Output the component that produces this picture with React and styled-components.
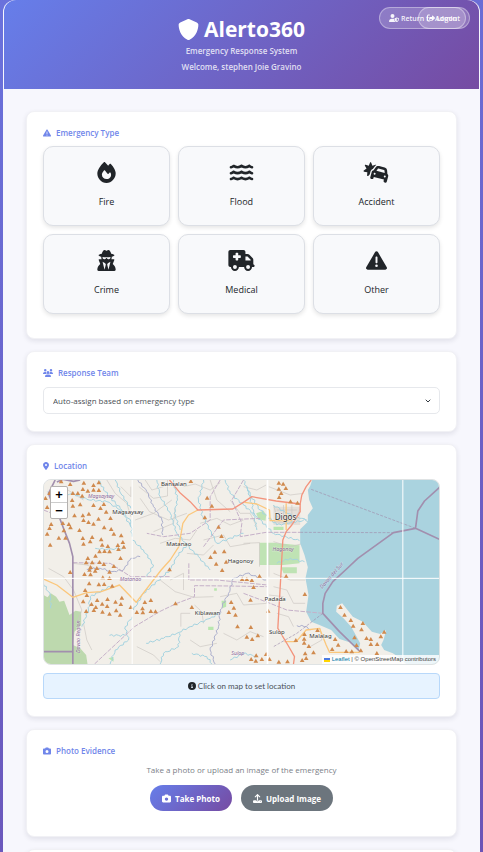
import React from "react";
import styled, { createGlobalStyle, css } from "styled-components";
import {
  FaShield,
  FaUserShield,
  FaRightFromBracket,
  FaTriangleExclamation,
  FaFire,
  FaWater,
  FaCarBurst,
  FaUserSecret,
  FaTruckMedical,
  FaUsers,
  FaLocationDot,
  FaCircleInfo,
  FaCamera,
  FaUpload,
} from "react-icons/fa6";

const GlobalStyle = createGlobalStyle`
  *, *::before, *::after { box-sizing: border-box; }
  body {
    margin: 0;
    background: linear-gradient(160deg, #6a72dc 0%, #6c52b4 100%);
    color: #212529;
    font-family: "Open Sans", "Noto Sans", sans-serif;
    font-size: 8px;
  }
  button, select { font-family: inherit; }
`;

const Shell = styled.div`
  margin: 0 3px;
  min-height: 100vh;
  padding: 0 1px;
  border-radius: 12px 12px 0 0;
  background: #f7f7fd;
`;

const Header = styled.header`
  position: relative;
  display: flex;
  flex-direction: column;
  align-items: center;
  padding: 16px 12px 14px;
  border-radius: 12px 12px 0 0;
  background: linear-gradient(135deg, #667eea 0%, #764ba2 100%);
  color: #fff;
`;

const Brand = styled.h1`
  display: flex;
  align-items: center;
  gap: 5px;
  margin: 0;
  font-size: 21px;
  font-weight: 700;
  line-height: 27px;
`;

const HeaderLine = styled.p`
  margin: 0;
  font-weight: 600;
  line-height: 16px;
  color: rgba(255, 255, 255, 0.8);
`;

const HeaderLink = styled.a`
  position: absolute;
  top: 7px;
  right: ${(p) => p.$right}px;
  display: flex;
  align-items: center;
  gap: 2px;
  height: 22px;
  padding: 0 ${(p) => p.$padEnd}px 0 ${(p) => p.$padStart}px;
  border: 1px solid rgba(255, 255, 255, 0.35);
  border-radius: 11px;
  background: rgba(255, 255, 255, 0.2);
  color: rgba(255, 255, 255, 0.92);
  font-size: 7px;
  font-weight: 600;
  white-space: nowrap;
  text-decoration: none;

  svg {
    width: ${(p) => p.$iconWidth || 8}px;
    height: 8px;
  }
`;

const Main = styled.main`
  display: flex;
  flex-direction: column;
  gap: 12px;
  padding: 22px 22px 0;
`;

const Card = styled.section`
  padding: 14px 16px 17px;
  min-height: 60px;
  border: 1px solid #f1f1f5;
  border-radius: 8px;
  background: #fff;
  box-shadow: 0 2px 5px rgba(30, 30, 60, 0.1);
`;

const titleStyle = css`
  display: flex;
  align-items: center;
  gap: 5px;
  margin: 0 0 7px;
  color: #7086ea;
  font-size: 8px;
  font-weight: 600;
  line-height: 13px;

  svg {
    width: ${(p) => p.$iconWidth || 8}px;
    height: 8px;
  }
`;

const CardTitle = styled.h2`
  ${titleStyle}
`;

const CardLabel = styled.label`
  ${titleStyle}
  margin-bottom: 8px;
`;

const TypeGrid = styled.div`
  display: grid;
  grid-template-columns: repeat(3, 1fr);
  gap: 8px;
  margin-bottom: 7px;
`;

const TypeButton = styled.button`
  display: flex;
  flex-direction: column;
  align-items: center;
  gap: 11px;
  height: 80px;
  padding: 15px 8px 0;
  border: 1px solid #dcdfe5;
  border-radius: 10px;
  background: #f8f9fb;
  box-shadow: 0 2px 4px rgba(0, 0, 0, 0.1);
  color: #212529;
  font-size: 9px;
  font-weight: 500;
  line-height: 14px;

  svg {
    width: 27px;
    height: 21px;
    margin-bottom: 1px;
  }
`;

const SelectWrap = styled.div`
  display: grid;
  align-items: center;
`;

const TeamSelect = styled.select`
  grid-area: 1 / 1;
  appearance: none;
  width: 100%;
  height: 27px;
  padding: 0 24px 0 9px;
  border: 1px solid #e6e8ec;
  border-radius: 5px;
  background: #fff;
  color: #4a4f55;
  font-size: 8px;
  font-weight: 500;
`;

const Chevron = styled.svg`
  grid-area: 1 / 1;
  justify-self: end;
  margin-right: 9px;
  width: 6px;
  height: 6px;
  pointer-events: none;
`;

const MapFrame = styled.div`
  position: relative;
  height: 186px;
  margin-bottom: 8px;
  overflow: hidden;
  border: 1px solid #dfe3e4;
  border-radius: 8px;
  background: #f2efe9;
`;

const MapArt = styled.svg`
  display: block;
  width: 100%;
  height: 100%;
`;

const ZoomBar = styled.div`
  position: absolute;
  top: 6px;
  left: 6px;
  display: flex;
  flex-direction: column;
  border: 1px solid #b5b2b0;
  border-radius: 2px;
  background: #fff;
`;

const ZoomButton = styled.button`
  width: 16px;
  height: 15px;
  padding: 0;
  border: 0;
  background: none;
  color: #000;
  font-family: "Liberation Sans", sans-serif;
  font-size: 13px;
  font-weight: 700;
  line-height: 14px;

  & + & {
    height: 16px;
    border-top: 1px solid #ccc;
  }
`;

const Attribution = styled.div`
  position: absolute;
  right: 0;
  bottom: 0;
  display: flex;
  align-items: center;
  gap: 2px;
  padding: 0 3px 0 2px;
  background: rgba(255, 255, 255, 0.8);
  color: #444;
  font-family: "Liberation Sans", sans-serif;
  font-size: 6px;
  line-height: 9px;
  white-space: nowrap;

  a {
    color: #0078a8;
    text-decoration: none;
  }
`;

const Flag = styled.svg`
  width: 6px;
  height: 4px;
`;

const Notice = styled.p`
  display: flex;
  align-items: center;
  justify-content: center;
  gap: 2px;
  height: 26px;
  margin: 0;
  border: 1px solid #b8d8fa;
  border-radius: 4px;
  background: #e7f3ff;
  color: #495057;
  font-family: Lato, "Open Sans", sans-serif;

  svg {
    color: #212529;
  }
`;

const Hint = styled.p`
  margin: 0 0 10px;
  color: #7b8087;
  line-height: 11px;
  text-align: center;
`;

const Actions = styled.div`
  display: flex;
  justify-content: center;
  gap: 9px;
  margin-bottom: 8px;
`;

const PillButton = styled.button`
  display: flex;
  align-items: center;
  gap: 4px;
  height: 26px;
  padding: 0 12px;
  border: 0;
  border-radius: 13px;
  background: ${(p) =>
    p.$primary ? "linear-gradient(135deg, #667eea 0%, #764ba2 100%)" : "#6c757d"};
  color: #fff;
  font-size: 8px;
  font-weight: 700;

  svg {
    width: 9px;
    height: 9px;
  }
`;

const TYPES = [
  { label: "Fire", Icon: FaFire },
  { label: "Flood", Icon: FaWater },
  { label: "Accident", Icon: FaCarBurst },
  { label: "Crime", Icon: FaUserSecret },
  { label: "Medical", Icon: FaTruckMedical },
  { label: "Other", Icon: FaTriangleExclamation },
];

const PEAKS = `53,5 80,13 121,9 166,8 150,16 118,28 133,33 150,30 166,31 6,55 18,40 88,40 103,40 116,48 86,61
150,76 181,73 171,85 188,96 201,115 11,82 88,78 110,74 93,107 118,107 136,102 165,117 120,121 135,127 150,132
76,133 58,130 23,133 18,145 81,143 108,151 61,152 11,162 46,174 66,174 20,195 118,175 120,192 140,185 146,172
182,143 203,148 211,162 233,167 238,187 173,179 176,195 168,215 183,214 198,215 193,199 223,196 225,208 241,201
156,228 133,235 231,235 146,248 128,248 168,247 181,253 211,259 141,262 160,265 442,4 491,54 505,78 484,113
525,141 534,169 542,215 514,216 501,232 548,246 518,252 80,277 138,270 155,273 123,283 141,284 198,276 178,293
198,295 137,311 166,314 182,313 206,318 125,331 130,346 119,365 161,361 192,358 235,354 216,366 232,373 144,373
157,382 176,372 191,379 128,394 151,391 177,396 198,402 218,392 230,405 262,382 280,397 298,398 304,367 322,361
297,386 322,394 336,395 378,269 396,371 445,382 536,271 596,298 563,367 571,384 556,397 576,405 582,440
706,9 719,12 706,27 727,25 713,40 707,52 741,65 762,69 610,298 625,301 648,289 728,289 630,322 621,360 784,343
674,393 622,442 610,471 643,467 626,478 638,527 623,538 637,543 655,538 668,523 678,538 706,546 732,545 776,541
788,535 785,521 810,518 796,499 782,489 782,477 783,463 757,481 822,451 875,478 884,495 866,508 908,514 925,515
952,512 939,496 891,382 903,405 922,421 929,438 954,449 958,430 933,473 969,475 982,478 982,493 1001,493
1012,470 1022,456 1000,520`
  .split(/\s+/)
  .map((p) => p.split(",").map(Number));

const parse = (text) => text.split(" ").map((p) => p.split(",").map(Number));

// Subdivides a polyline and bends it sideways so that streams look natural.
function meander(text, amp = 3) {
  const pts = parse(text);
  const out = [pts[0]];
  for (let i = 1; i < pts.length; i += 1) {
    const [x0, y0] = pts[i - 1];
    const [x1, y1] = pts[i];
    const len = Math.hypot(x1 - x0, y1 - y0) || 1;
    const steps = Math.max(2, Math.round(len / 7));
    for (let s = 1; s <= steps; s += 1) {
      const t = s / steps;
      const k = Math.sin(s * 2.3 + x0) * amp * (s === steps ? 0 : 1);
      out.push([
        Math.round(x0 + (x1 - x0) * t - ((y1 - y0) / len) * k),
        Math.round(y0 + (y1 - y0) * t + ((x1 - x0) / len) * k),
      ]);
    }
  }
  return out.map((p) => p.join(",")).join(" ");
}

const STREAMS = [
  "165,0 185,35 230,85 262,125 266,170",
  "215,0 235,45 262,85",
  "85,40 130,58 190,65 235,92 262,140",
  "12,35 50,50 85,40",
  "340,0 350,50 378,95 400,160 430,195",
  "390,0 402,60 392,100 410,150",
  "480,0 465,60 478,110 500,150 520,190 600,160",
  "545,0 560,40 600,75 640,110 690,160 768,182",
  "266,180 300,210 330,255 310,290",
  "430,195 400,230 380,270 300,340 270,390",
  "430,195 470,235 500,270",
  "155,205 190,208 240,205",
  "0,310 20,345 22,385",
  "266,410 245,440 255,480 215,510 200,552",
  "198,466 245,466",
  "308,490 360,475 400,460 440,440 500,415 528,400",
  "350,552 360,520 405,500 408,460",
  "445,520 490,530 505,552",
  "200,320 140,350 135,390 115,440",
  "600,0 620,45 650,90 700,135 790,120",
  "700,250 740,235 783,245",
  "690,75 730,100 775,115 795,125",
  "560,540 600,520 640,530",
  "610,20 625,70 640,150",
];

const BORDER_STREAMS = [
  "283,0 310,35 330,80 355,120 358,165",
  "130,268 170,265 205,275 240,270 262,235 290,230",
  "668,300 610,280 570,295 555,340 530,390 525,440 500,510 515,552",
  "760,437 790,440 800,450",
];

const LANES = [
  "190,0 215,40 250,70 262,110",
  "232,20 262,50 262,20",
  "286,20 330,55 372,48 372,0",
  "290,55 318,95 375,120 430,100",
  "275,120 330,100 385,60",
  "330,155 390,130 395,85",
  "350,190 395,175 440,180 460,150",
  "420,20 455,12 500,30 530,8",
  "470,130 520,115 560,135 600,120",
  "480,180 540,165 560,200 620,190",
  "430,220 480,225 510,195",
  "350,300 395,335 452,352 510,350",
  "380,300 420,280 420,330",
  "453,375 475,395 480,430",
  "412,440 412,400 440,400",
  "530,350 580,340 600,375 670,370",
  "540,460 580,480 620,455 660,470",
  "280,500 330,525 350,545",
  "440,480 470,500 520,490",
  "15,265 60,290 90,330 115,390 100,430",
  "120,430 130,480 145,510",
  "88,250 130,255 170,270",
  "600,20 640,30 668,15",
  "676,20 740,45 780,40",
  "600,190 648,188 648,260",
  "676,190 676,290",
  "690,280 740,300 785,300",
  "690,320 730,330 750,370 785,370",
  "676,345 720,350",
  "560,60 590,100 620,100 640,140",
  "690,75 700,110 760,110 770,85",
  "700,90 760,90",
  "720,75 720,130",
  "745,75 745,130",
  "690,125 750,130",
  "780,190 740,200 690,185",
  "750,440 735,410 700,400",
  "830,445 835,480 800,500",
  "500,0 520,60 560,95",
  "305,0 325,30 360,20",
  "20,20 70,28 120,60",
];

function EmergencyMap() {
  return (
    <MapArt viewBox="0 0 1188 552" preserveAspectRatio="xMidYMid slice" role="img" aria-label="Map">
      <rect width="1188" height="552" fill="#f2efe9" />
      <path
        d="M0 345L12 352L22 340L38 350L48 365L62 362L78 405L96 392L113 395V435L93 455L88 495L110 505L128 525L132 552H0Z"
        fill="#bdd9ae"
      />
      <path
        d="M648 188H690L768 196V250L720 255H648ZM638 100L660 92L668 105L666 122L645 118ZM713 262H760V280H720Z"
        fill="#bfe3b4"
      />
      <path d="M534 362H548V380L536 385ZM494 440H510V450H494ZM690 140H720V150H690ZM512 325H520V332H512ZM195 535L210 530V545Z" fill="#b9e6ae" />
      <path d="M690 80H770V135H690Z" fill="#e4dfd9" />

      <g fill="none" stroke="#cbc7c2" strokeWidth="2">
        {LANES.map((l) => (
          <polyline key={l} points={l} />
        ))}
      </g>
      <g fill="none" stroke="#a5d3e0" strokeWidth="3">
        {STREAMS.map((s) => (
          <polyline key={s} points={meander(s)} />
        ))}
      </g>
      <g fill="none" stroke="#adb0cd" strokeWidth="3">
        {BORDER_STREAMS.map((s) => (
          <polyline key={s} points={meander(s)} />
        ))}
      </g>

      <path
        d="M806 0L800 18L793 30L797 60L808 85L793 105V125L770 148V190L783 225L793 262L786 295L795 345L788 395L803 425L828 435L863 450L888 477L918 487L945 514L950 490L935 462L923 440L900 415L878 395L880 377L896 370L928 410L958 425L985 455L1010 462L1028 450L1020 480L1013 495L1022 510L1048 520L1066 532L1088 552H1188V0Z"
        fill="#aad3df"
      />

      <g fill="none" stroke="#c5b0c8" strokeWidth="3" strokeDasharray="14 4">
        <polyline points="153,552 273,440 348,395 400,370 453,350 453,317 560,318 672,320" />
        <polyline points="530,0 500,50 500,120 440,160 360,170 310,160" />
        <polyline points="600,0 565,60 595,130 590,170 668,157 770,157" />
        <polyline points="480,200 540,120 650,115" />
        <polyline points="0,90 46,108" />
        <polyline points="436,250 436,300 520,300 672,315" />
        <polyline points="88,248 200,250 262,290 380,290" />
        <polyline points="600,340 680,370 730,390 838,400" />
      </g>
      <g fill="none" stroke="#a08fae" strokeWidth="2" strokeDasharray="9 4">
        <polyline points="803,28 1116,145" />
        <polyline points="770,157 1050,158" />
        <polyline points="838,400 760,460 690,500" />
      </g>
      <g fill="none" stroke="#a28fae" strokeWidth="5" strokeLinejoin="round">
        <polyline points="35,0 15,40 30,80 46,108 62,150 78,190 88,230 88,552" />
        <polyline points="40,6 60,-2 90,4 110,0" />
        <polyline points="0,515 88,515" />
        <polyline points="1188,22 1143,63 1123,93 1116,145 1188,178" />
        <polyline points="1116,145 1050,158 943,235 906,270 868,305 845,340 838,370 838,400 888,455 948,513" />
      </g>

      <g fill="none" stroke="#fbc77c" strokeWidth="4" strokeLinejoin="round">
        <polyline points="463,90 435,105 418,130 412,165 406,200 380,240 353,270 278,367 228,315 200,325 173,335 130,338 88,352 40,315 0,297" />
        <polyline points="603,67 640,72 678,90 680,122 745,122" />
        <polyline points="723,485 758,485 788,450 828,445 848,495 858,517 948,517" />
        <polyline points="728,70 728,150" />
      </g>
      <g fill="none" stroke="#f3937c" strokeWidth="4" strokeLinejoin="round">
        <polyline points="378,0 411,40 440,65 463,90 568,87 603,65 625,50 698,63 770,72 775,45 788,20 803,0" />
        <polyline points="770,72 770,95 745,135 728,155 718,180 713,270 703,445 733,495 753,530 750,552" />
      </g>

      <g fill="#d08a4e">
        {PEAKS.map(([x, y]) => (
          <path key={`${x}-${y}`} d={`M${x} ${y - 7}l7 12h-14z`} />
        ))}
      </g>

      <g stroke="#fff" strokeWidth="3">
        <path d="M266 0V552M1078 0V552M0 295H1188" />
        <path d="M672 0V552" strokeWidth="5" />
      </g>

      <g
        fontFamily="Noto Sans, sans-serif"
        fontSize="18"
        textAnchor="middle"
        fill="#333"
        stroke="#fff"
        strokeWidth="3"
        strokeOpacity="0.6"
        paintOrder="stroke"
      >
        <text x="391" y="18">Bansalan</text>
        <text x="253" y="101">Magsaysay</text>
        <text x="406" y="199">Matanao</text>
        <text x="591" y="249">Hagonoy</text>
        <text x="695" y="363">Padada</text>
        <text x="492" y="406">Kiblawan</text>
        <text x="700" y="462">Sulop</text>
        <text x="831" y="474">Malalag</text>
        <text x="726" y="120" fontSize="24">Digos</text>
        <g fill="#8d6a9c" fontSize="16" fontStyle="italic" strokeOpacity="0.3">
          <text x="173" y="55">Magsaysay</text>
          <text x="719" y="212">Hagonoy</text>
          <text x="261" y="304">Matanao</text>
          <text x="583" y="524">Sulop</text>
          <text transform="translate(110 470) rotate(-90)">Davao Region</text>
          <text transform="translate(868 290) rotate(-49)">Davao del Sur</text>
        </g>
      </g>
    </MapArt>
  );
}

export default function App() {
  return (
    <>
      <GlobalStyle />
      <Shell>
        <Header>
          <Brand>
            <FaShield />
            Alerto360
          </Brand>
          <HeaderLine>Emergency Response System</HeaderLine>
          <HeaderLine>Welcome, stephen Joie Gravino</HeaderLine>
          <HeaderLink href="#admin" $right={9} $padStart={9} $padEnd={12} $iconWidth={10}>
            <FaUserShield />
            Return to Admin
          </HeaderLink>
          <HeaderLink href="#logout" $right={13} $padStart={8} $padEnd={5}>
            <FaRightFromBracket />
            Logout
          </HeaderLink>
        </Header>

        <Main>
          <Card>
            <CardTitle>
              <FaTriangleExclamation />
              Emergency Type
            </CardTitle>
            <TypeGrid>
              {TYPES.map(({ label, Icon }) => (
                <TypeButton key={label} type="button">
                  <Icon />
                  {label}
                </TypeButton>
              ))}
            </TypeGrid>
          </Card>

          <Card>
            <CardLabel htmlFor="team" $iconWidth={10}>
              <FaUsers />
              Response Team
            </CardLabel>
            <SelectWrap>
              <TeamSelect id="team" defaultValue="auto">
                <option value="auto">Auto-assign based on emergency type</option>
              </TeamSelect>
              <Chevron viewBox="0 0 6 6" aria-hidden="true">
                <path d="M1 2l2 2 2-2" fill="none" stroke="#343a40" strokeWidth="1" strokeLinecap="round" />
              </Chevron>
            </SelectWrap>
          </Card>

          <Card>
            <CardTitle $iconWidth={6}>
              <FaLocationDot />
              Location
            </CardTitle>
            <MapFrame>
              <EmergencyMap />
              <ZoomBar>
                <ZoomButton type="button" aria-label="Zoom in">+</ZoomButton>
                <ZoomButton type="button" aria-label="Zoom out">−</ZoomButton>
              </ZoomBar>
              <Attribution>
                <Flag viewBox="0 0 6 4" aria-hidden="true">
                  <path d="M0 0h6v2H0z" fill="#4c7be1" />
                  <path d="M0 2h6v2H0z" fill="#ffd500" />
                </Flag>
                <span>
                  <a href="#leaflet">Leaflet</a> | © OpenStreetMap contributors
                </span>
              </Attribution>
            </MapFrame>
            <Notice>
              <FaCircleInfo />
              Click on map to set location
            </Notice>
          </Card>

          <Card>
            <CardTitle>
              <FaCamera />
              Photo Evidence
            </CardTitle>
            <Hint>Take a photo or upload an image of the emergency</Hint>
            <Actions>
              <PillButton type="button" $primary>
                <FaCamera />
                Take Photo
              </PillButton>
              <PillButton type="button">
                <FaUpload />
                Upload Image
              </PillButton>
            </Actions>
          </Card>

          <Card />
        </Main>
      </Shell>
    </>
  );
}
